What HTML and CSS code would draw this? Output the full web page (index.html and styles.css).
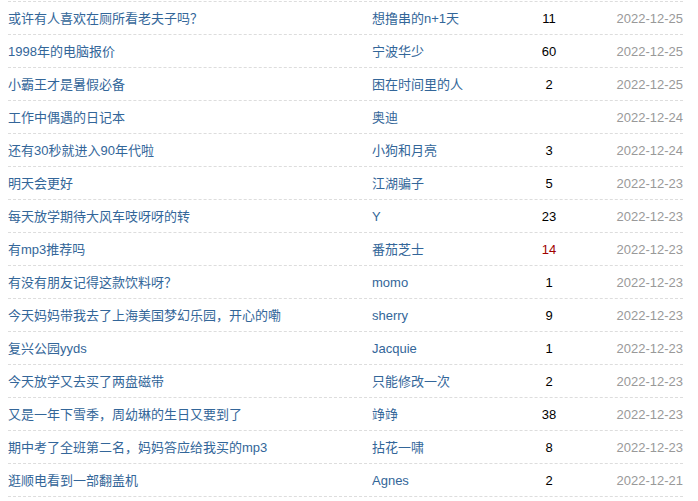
FILE: index.html
```html
<!DOCTYPE html>
<html lang="zh-CN">
<head>
<meta charset="utf-8">
<title>帖子列表</title>
<link rel="stylesheet" href="styles.css">
</head>
<body>
<ul class="list">
  <li class="row"><a class="title" href="#">或许有人喜欢在厕所看老夫子吗？</a><a class="author" href="#">想撸串的n+1天</a><span class="count">11</span><span class="date">2022-12-25</span></li>
  <li class="row"><a class="title" href="#">1998年的电脑报价</a><a class="author" href="#">宁波华少</a><span class="count">60</span><span class="date">2022-12-25</span></li>
  <li class="row"><a class="title" href="#">小霸王才是暑假必备</a><a class="author" href="#">困在时间里的人</a><span class="count">2</span><span class="date">2022-12-25</span></li>
  <li class="row"><a class="title" href="#">工作中偶遇的日记本</a><a class="author" href="#">奥迪</a><span class="count"></span><span class="date">2022-12-24</span></li>
  <li class="row"><a class="title" href="#">还有30秒就进入90年代啦</a><a class="author" href="#">小狗和月亮</a><span class="count">3</span><span class="date">2022-12-24</span></li>
  <li class="row"><a class="title" href="#">明天会更好</a><a class="author" href="#">江湖骗子</a><span class="count">5</span><span class="date">2022-12-23</span></li>
  <li class="row"><a class="title" href="#">每天放学期待大风车吱呀呀的转</a><a class="author" href="#">Y</a><span class="count">23</span><span class="date">2022-12-23</span></li>
  <li class="row"><a class="title" href="#">有mp3推荐吗</a><a class="author" href="#">番茄芝士</a><span class="count hot">14</span><span class="date">2022-12-23</span></li>
  <li class="row"><a class="title" href="#">有没有朋友记得这款饮料呀？</a><a class="author" href="#">momo</a><span class="count">1</span><span class="date">2022-12-23</span></li>
  <li class="row"><a class="title" href="#">今天妈妈带我去了上海美国梦幻乐园，开心的嘞</a><a class="author" href="#">sherry</a><span class="count">9</span><span class="date">2022-12-23</span></li>
  <li class="row"><a class="title" href="#">复兴公园yyds</a><a class="author" href="#">Jacquie</a><span class="count">1</span><span class="date">2022-12-23</span></li>
  <li class="row"><a class="title" href="#">今天放学又去买了两盘磁带</a><a class="author" href="#">只能修改一次</a><span class="count">2</span><span class="date">2022-12-23</span></li>
  <li class="row"><a class="title" href="#">又是一年下雪季，周幼琳的生日又要到了</a><a class="author" href="#">竫竫</a><span class="count">38</span><span class="date">2022-12-23</span></li>
  <li class="row"><a class="title" href="#">期中考了全班第二名，妈妈答应给我买的mp3</a><a class="author" href="#">拈花一啸</a><span class="count">8</span><span class="date">2022-12-23</span></li>
  <li class="row"><a class="title" href="#">逛顺电看到一部翻盖机</a><a class="author" href="#">Agnes</a><span class="count">2</span><span class="date">2022-12-21</span></li>
</ul>
</body>
</html>
```
FILE: styles.css
```css
html, body {
  background: #fff;
}
body {
  margin: 0;
  padding: 1px 15px 0 8px;
  font-family: "Liberation Sans", Arial, "Noto Sans CJK SC", sans-serif;
  font-size: 13px;
}
.list {
  list-style: none;
  margin: 0;
  padding: 0;
  border-top: 1px dashed #ddd;
}
.row {
  display: grid;
  grid-template-columns: 364px 130px 94px 1fr;
  height: 30px;
  padding-top: 2px;
  line-height: 30px;
  border-bottom: 1px dashed #ddd;
  white-space: nowrap;
}
.title, .author {
  color: #336699;
  text-decoration: none;
  overflow: hidden;
}
.count {
  color: #000;
  text-align: center;
}
.count.hot {
  color: #a00000;
}
.date {
  color: #999;
  text-align: right;
}
```
